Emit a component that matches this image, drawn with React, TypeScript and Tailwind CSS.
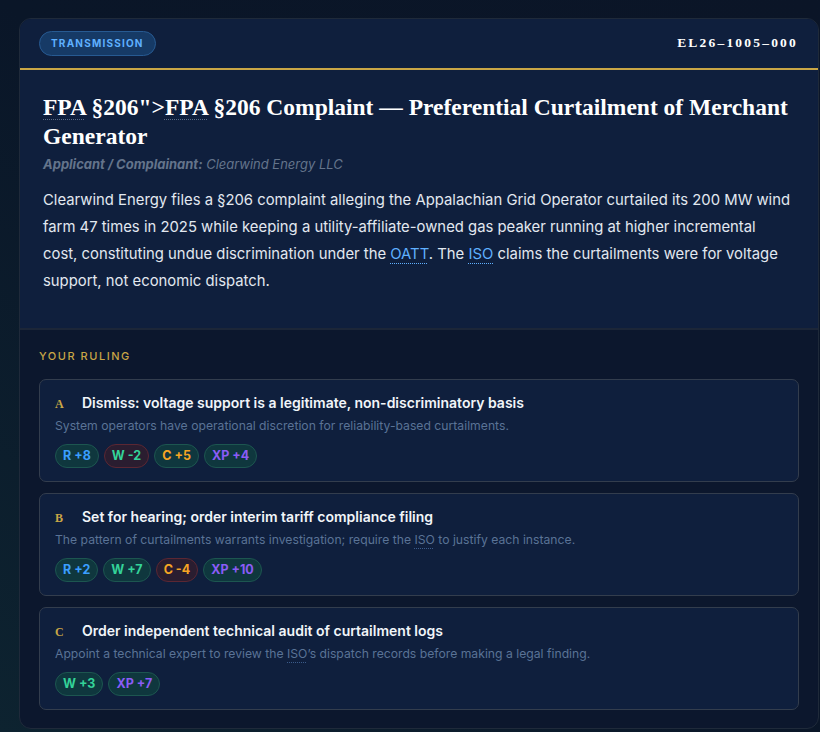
import React from 'react';

type Effect = { label: string; value: number; color: string };

interface RulingOption {
  letter: string;
  title: string;
  desc: React.ReactNode;
  effects: Effect[];
}

const statColor: Record<string, string> = {
  R: 'text-[#3b9eff]',
  W: 'text-[#34d399]',
  C: 'text-[#f5a524]',
  XP: 'text-[#8b5cf6]',
};

// dotted-underlined glossary term
const Term = ({ children, className = '' }: { children: React.ReactNode; className?: string }) => (
  <abbr className={`underline decoration-dotted decoration-1 underline-offset-[4px] ${className}`}>{children}</abbr>
);

const options: RulingOption[] = [
  {
    letter: 'A',
    title: 'Dismiss: voltage support is a legitimate, non-discriminatory basis',
    desc: 'System operators have operational discretion for reliability-based curtailments.',
    effects: [
      { label: 'R', value: 8, color: statColor.R },
      { label: 'W', value: -2, color: statColor.W },
      { label: 'C', value: 5, color: statColor.C },
      { label: 'XP', value: 4, color: statColor.XP },
    ],
  },
  {
    letter: 'B',
    title: 'Set for hearing; order interim tariff compliance filing',
    desc: (
      <>
        The pattern of curtailments warrants investigation; require the <Term className="decoration-[#3b5b8a]">ISO</Term> to justify each instance.
      </>
    ),
    effects: [
      { label: 'R', value: 2, color: statColor.R },
      { label: 'W', value: 7, color: statColor.W },
      { label: 'C', value: -4, color: statColor.C },
      { label: 'XP', value: 10, color: statColor.XP },
    ],
  },
  {
    letter: 'C',
    title: 'Order independent technical audit of curtailment logs',
    desc: (
      <>
        Appoint a technical expert to review the <Term className="decoration-[#3b5b8a]">ISO</Term>’s dispatch records before making a legal finding.
      </>
    ),
    effects: [
      { label: 'W', value: 3, color: statColor.W },
      { label: 'XP', value: 7, color: statColor.XP },
    ],
  },
];

const EffectPill = ({ effect }: { effect: Effect }) => {
  const negative = effect.value < 0;
  return (
    <span
      className={`inline-flex h-[24px] items-center rounded-full border px-[7px] text-[12.5px] font-bold ${effect.color} ${
        negative ? 'border-[#5b2733] bg-[#2a1d30]' : 'border-[#1d5650] bg-[#0f373e]'
      }`}
    >
      {effect.label} {negative ? `-${Math.abs(effect.value)}` : `+${effect.value}`}
    </span>
  );
};

export default function App() {
  return (
    <div className="min-h-[732px] bg-gradient-to-tr from-[#0d2330] via-[#0a1628] to-[#0b1527] pl-[19px] pt-[18px] pb-[5px] font-['Inter',sans-serif]">
      <div className="w-[800px] overflow-hidden rounded-[12px] border border-[#1f2a3a] bg-[#0c172d]">
        {/* header */}
        <div className="flex h-[49px] items-center justify-between bg-[#0f1f3d] pl-[19px] pr-[20px]">
          <span className="flex h-[25px] items-center rounded-full border border-[#275a92] bg-[#163a66] px-[11px] text-[10px] font-bold tracking-[0.12em] text-[#5fb0ff]">
            TRANSMISSION
          </span>
          <span className="font-['Liberation_Serif',serif] text-[13.5px] font-bold tracking-[2.2px] text-white">EL26–1005–000</span>
        </div>
        <div className="h-[2px] bg-[#c9a646]" />

        {/* case */}
        <div className="border-b-2 border-[#1c2638] bg-[#0f1f3d] pl-[23px] pr-[26px] pt-[23px] pb-[33px]">
          <h1 className="font-['Liberation_Serif',serif] text-[23.5px] font-bold leading-[29px] text-white">
            <Term className="decoration-[#5a6b85]">FPA</Term> §206"&gt;<Term className="decoration-[#5a6b85]">FPA</Term> §206 Complaint — Preferential Curtailment of Merchant Generator
          </h1>
          <p className="mt-[3px] text-[13px] leading-[20px] italic text-[#64748b]">
            <span className="font-bold">Applicant / Complainant:</span> Clearwind Energy LLC
          </p>
          <p className="mt-[13px] text-[14.85px] leading-[27px] text-[#e2e8f0]">
            Clearwind Energy files a §206 complaint alleging the Appalachian Grid Operator curtailed its 200 MW wind farm 47 times in 2025 while keeping a utility-affiliate-owned gas peaker running at higher incremental cost, constituting undue discrimination under the{' '}
            <Term className="text-[#5fb0ff] decoration-[#5fb0ff]">OATT</Term>. The <Term className="text-[#5fb0ff] decoration-[#5fb0ff]">ISO</Term> claims the curtailments were for voltage support, not economic dispatch.
          </p>
        </div>

        {/* ruling */}
        <div className="px-[19px] pt-[18px] pb-[18px]">
          <div className="text-[11px] leading-[16px] font-medium tracking-[0.14em] text-[#c9a646]">YOUR RULING</div>
          <div className="mt-[15px] flex flex-col gap-[11px]">
            {options.map((opt) => (
              <div key={opt.letter} className="rounded-[7px] border border-[#333d4d] bg-[#0f1f3d] px-[15px] pt-[13px] pb-[13px]">
                <div className="flex items-baseline leading-[20px]">
                  <span className="w-[27px] font-['Liberation_Serif',serif] text-[12px] font-bold text-[#c9a646]">{opt.letter}</span>
                  <span className="text-[14px] font-semibold text-[#f1f5f9]">{opt.title}</span>
                </div>
                <p className="mt-[3px] text-[12.2px] leading-[18px] text-[#5a7396]">{opt.desc}</p>
                <div className="mt-[9px] flex gap-[5px]">
                  {opt.effects.map((e) => (
                    <EffectPill key={e.label} effect={e} />
                  ))}
                </div>
              </div>
            ))}
          </div>
        </div>
      </div>
    </div>
  );
}
